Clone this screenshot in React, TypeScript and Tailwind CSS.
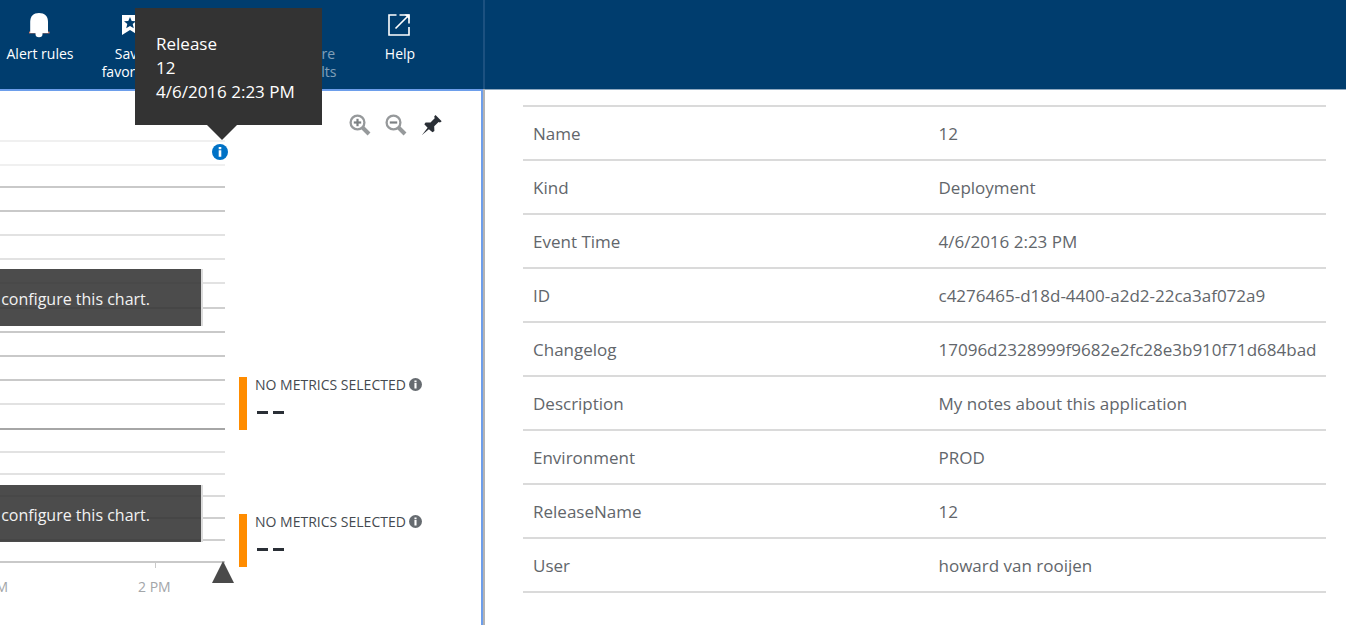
import type { ReactNode } from "react";

const gridLines = [
  { y: 0, color: "#f0f0f0" },
  { y: 24, color: "#f0f0f0" },
  { y: 46, color: "#c9c9c9" },
  { y: 70, color: "#c9c9c9" },
  { y: 94, color: "#e2e2e2" },
  { y: 118, color: "#e2e2e2" },
  { y: 142, color: "#e2e2e2" },
  { y: 167, color: "#cfcfcf" },
  { y: 191, color: "#c9c9c9" },
  { y: 215, color: "#c9c9c9" },
  { y: 239, color: "#c9c9c9" },
  { y: 263, color: "#e2e2e2" },
  { y: 288, color: "#a6a6a6" },
  { y: 311, color: "#e2e2e2" },
  { y: 333, color: "#e2e2e2" },
  { y: 355, color: "#dadada" },
  { y: 377, color: "#cfcfcf" },
  { y: 399, color: "#cfcfcf" },
  { y: 421, color: "#c9c9c9" },
];

const details = [
  ["Name", "12"],
  ["Kind", "Deployment"],
  ["Event Time", "4/6/2016 2:23 PM"],
  ["ID", "c4276465-d18d-4400-a2d2-22ca3af072a9"],
  ["Changelog", "17096d2328999f9682e2fc28e3b910f71d684bad"],
  ["Description", "My notes about this application"],
  ["Environment", "PROD"],
  ["ReleaseName", "12"],
  ["User", "howard van rooijen"],
];

function BellIcon() {
  return (
    <svg width="22" height="26" viewBox="0 0 22 26" aria-hidden="true">
      <path d="M0 20.5h20.500" stroke="#d9826a" strokeWidth="1.8" />
      <path d="M1.200 21V10C1.200 4 4.500 1 10 1s9 3 9 9v11Z" fill="#fff" />
      <path d="M6.500 20h7v2a3.500 3.200 0 0 1-7 0Z" fill="#fff" />
    </svg>
  );
}

function FavoriteIcon() {
  return (
    <svg width="16" height="22" viewBox="0 0 16 22" aria-hidden="true">
      <path d="M0 1h16v20l-8-5-8 5Z" fill="#fff" />
      <path
        d="m8 3 1.700 3.900 4.300.3-3.300 2.800 1.100 4.200L8 12l-3.800 2.200 1.100-4.200L2 7.200l4.300-.3Z"
        fill="#003d6e"
      />
    </svg>
  );
}

function ExternalIcon() {
  return (
    <svg width="24" height="24" viewBox="0 0 24 24" fill="none" stroke="#fff" aria-hidden="true">
      <path d="M8.500 2H1v20h20v-8" strokeWidth="1.600" />
      <path d="M11.500 2H21v8.500M7.500 15.500 20.500 2.500" strokeWidth="1.600" />
      <path d="M16.500 1.500h5v5Z" fill="#fff" stroke="none" />
    </svg>
  );
}

function ZoomIcon({ plus = false }: { plus?: boolean }) {
  return (
    <svg width="22" height="22" viewBox="0 0 22 22" fill="none" stroke="#96999b" aria-hidden="true">
      <circle cx="8.500" cy="8.500" r="6.900" strokeWidth="2.300" />
      <path d="m13.500 13.500 6.500 6.500" strokeWidth="4" />
      <path d="M4.800 8.500h7.400" stroke="#7d8184" strokeWidth="2.200" />
      {plus && <path d="M8.500 4.800v7.400" stroke="#7d8184" strokeWidth="2.200" />}
    </svg>
  );
}

function PinIcon() {
  return (
    <svg width="22" height="22" viewBox="0 0 22 22" fill="#2a2f36" aria-hidden="true">
      <path d="M14.500 1 20.700 7.200 19 8.500 17.600 8 13.200 12.200 13.400 17 11.500 18.200 7.900 15.200 1 21 6.600 13.800 3.300 10.200 4.600 8.500 9.500 8.600 13.700 4.300 13.200 2.600Z" />
    </svg>
  );
}

function InfoIcon({ size, color }: { size: number; color: string }) {
  return (
    <svg width={size} height={size} viewBox="0 0 16 16" aria-hidden="true">
      <circle cx="8" cy="8" r="8" fill={color} />
      <path d="M6.700 3h2.600v2.200H6.700ZM6.700 6.300h2.600v6.500H6.700Z" fill="#fff" />
    </svg>
  );
}

function Command({ icon, label, className = "" }: { icon?: ReactNode; label: string; className?: string }) {
  return (
    <button
      type="button"
      className={`flex w-[90px] shrink-0 flex-col items-center px-2 text-center text-sm leading-[18px] font-medium ${className}`}
    >
      <span className="mb-1 flex h-8 items-center">{icon}</span>
      {label}
    </button>
  );
}

function ConfigureBanner({ className }: { className: string }) {
  return (
    <button
      type="button"
      className={`absolute left-0 flex h-[57px] w-[203px] items-center justify-end overflow-hidden border-r-2 border-[#dcdcdc] bg-[#333333]/88 bg-clip-padding pr-[51px] pt-[2px] text-base whitespace-nowrap text-[#f2f2f2] ${className}`}
    >
      configure this chart.
    </button>
  );
}

function Metric() {
  return (
    <div className="flex h-[53px] gap-2">
      <div className="w-2 bg-[#ff8c00]" />
      <div>
        <div className="flex h-[15px] items-center gap-[3px] text-sm text-[#454a50]">
          NO METRICS SELECTED
          <InfoIcon size={13} color="#666b70" />
        </div>
        <div role="img" aria-label="No value" className="flex h-10 items-center gap-[5px] pl-[2px]">
          <span className="h-[3px] w-[11px] bg-[#2a2f36]" />
          <span className="h-[3px] w-[11px] bg-[#2a2f36]" />
        </div>
      </div>
    </div>
  );
}

export default function App() {
  return (
    <div className="flex min-h-screen overflow-hidden bg-white font-['Open_Sans','Noto_Sans',sans-serif]">
      <section className="relative flex w-[485px] shrink-0 flex-col">
        <header className="flex h-[89px] justify-end overflow-hidden border-r-2 border-[#1c5180] bg-[#003d6e] pt-[9px] pr-[38px] text-white">
          <Command icon={<BellIcon />} label="Alert rules" />
          <Command icon={<FavoriteIcon />} label="Save favorites" />
          <Command label="Restore defaults" className="ml-[90px] opacity-50" />
          <Command icon={<ExternalIcon />} label="Help" />
        </header>

        <div className="flex-1 border-r-2 border-[#b3b3b3]">
          <div className="h-full border-t-2 border-r-2 border-[#6d9eeb]">
            <div className="flex justify-end gap-[14px] pt-[23px] pr-[38px] pb-1">
              <button type="button" aria-label="Zoom in">
                <ZoomIcon plus />
              </button>
              <button type="button" aria-label="Zoom out">
                <ZoomIcon />
              </button>
              <button type="button" aria-label="Pin chart">
                <PinIcon />
              </button>
            </div>

            <div className="flex gap-[14px]">
              <div className="relative w-[225px]">
                <svg width="225" height="429" aria-hidden="true">
                  {gridLines.map((line) => (
                    <rect key={line.y} y={line.y} width="225" height="2" fill={line.color} />
                  ))}
                  <rect x="155" y="423" width="1" height="5" fill="#c9c9c9" />
                </svg>
                <div className="flex h-9 items-center text-sm text-[#a3a6a9]">
                  <span className="flex w-2 justify-end overflow-hidden">PM</span>
                  <span className="ml-[130px]">2 PM</span>
                </div>
                <ConfigureBanner className="top-[129px]" />
                <ConfigureBanner className="top-[345px]" />
                <button type="button" aria-label="Release 12" className="absolute top-1 left-[212px]">
                  <InfoIcon size={16} color="#0072c6" />
                </button>
                <svg className="absolute top-[421px] left-[212px]" width="22" height="22" aria-hidden="true">
                  <path d="M11 0 22 22H0Z" fill="#4a4a4a" />
                </svg>
              </div>
              <div className="flex flex-col gap-[84px] pt-[237px]">
                <Metric />
                <Metric />
              </div>
            </div>
          </div>
        </div>

        <div role="tooltip" className="absolute top-2 left-[135px]">
          <div className="h-[117px] w-[187px] bg-[#333333] pt-6 pl-[21px] text-[17px] leading-6 text-white">
            <p>Release</p>
            <p>12</p>
            <p className="whitespace-nowrap">4/6/2016 2:23 PM</p>
          </div>
          <svg className="ml-[72px]" width="30" height="15" aria-hidden="true">
            <path d="M0 0h30L15 15Z" fill="#333333" />
          </svg>
        </div>
      </section>

      <section className="min-w-0 flex-1">
        <header className="h-[90px] border-b border-[#8fa9c0] bg-[#003d6e]" />
        <div className="pt-[15px] pr-5 pl-[38px]">
          <table className="w-full table-fixed border-collapse text-[17px] leading-6 text-[#62666b]">
            <tbody>
              {details.map(([name, value]) => (
                <tr key={name} className="h-[54px] border-y-2 border-[#dadada]">
                  <th scope="row" className="w-1/2 pt-[2px] pl-[10px] text-left font-normal">
                    {name}
                  </th>
                  <td className="pt-[2px] pl-[14px] whitespace-nowrap">{value}</td>
                </tr>
              ))}
            </tbody>
          </table>
        </div>
      </section>
    </div>
  );
}
